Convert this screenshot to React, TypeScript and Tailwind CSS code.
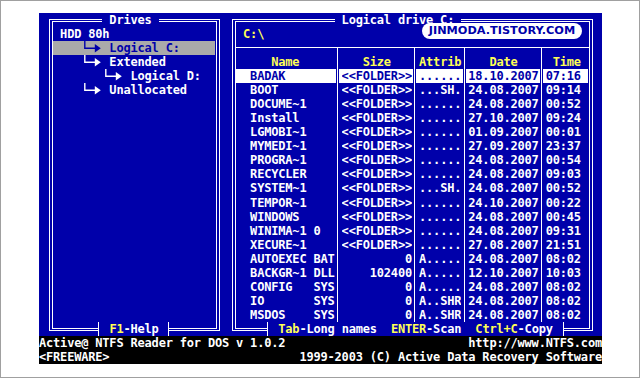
import React from "react";

type FileRow = { name: string; size: string; attr: string; date: string; time: string };

const files: FileRow[] = [
  { name: "BADAK", size: "<<FOLDER>>", attr: "......", date: "18.10.2007", time: "07:16" },
  { name: "BOOT", size: "<<FOLDER>>", attr: "...SH.", date: "24.08.2007", time: "09:14" },
  { name: "DOCUME~1", size: "<<FOLDER>>", attr: "......", date: "24.08.2007", time: "00:52" },
  { name: "Install", size: "<<FOLDER>>", attr: "......", date: "27.10.2007", time: "09:24" },
  { name: "LGMOBI~1", size: "<<FOLDER>>", attr: "......", date: "01.09.2007", time: "00:01" },
  { name: "MYMEDI~1", size: "<<FOLDER>>", attr: "......", date: "27.09.2007", time: "23:37" },
  { name: "PROGRA~1", size: "<<FOLDER>>", attr: "......", date: "24.08.2007", time: "00:54" },
  { name: "RECYCLER", size: "<<FOLDER>>", attr: "......", date: "24.08.2007", time: "09:03" },
  { name: "SYSTEM~1", size: "<<FOLDER>>", attr: "...SH.", date: "24.08.2007", time: "00:52" },
  { name: "TEMPOR~1", size: "<<FOLDER>>", attr: "......", date: "24.10.2007", time: "00:22" },
  { name: "WINDOWS", size: "<<FOLDER>>", attr: "......", date: "24.08.2007", time: "00:45" },
  { name: "WINIMA~1 0", size: "<<FOLDER>>", attr: "......", date: "24.08.2007", time: "09:31" },
  { name: "XECURE~1", size: "<<FOLDER>>", attr: "......", date: "27.08.2007", time: "21:51" },
  { name: "AUTOEXEC BAT", size: "0", attr: "A.....", date: "24.08.2007", time: "08:02" },
  { name: "BACKGR~1 DLL", size: "102400", attr: "A.....", date: "12.10.2007", time: "10:03" },
  { name: "CONFIG   SYS", size: "0", attr: "A.....", date: "24.08.2007", time: "08:02" },
  { name: "IO       SYS", size: "0", attr: "A..SHR", date: "24.08.2007", time: "08:02" },
  { name: "MSDOS    SYS", size: "0", attr: "A..SHR", date: "24.08.2007", time: "08:02" },
];

function Frame({ className }: { className: string }) {
  return (
    <div className={`${className} pt-[5.5px] pb-[5.2px] pl-[2.5px] pr-[1.8px]`}>
      <div className="h-full border border-white px-[2px] py-[1px]">
        <div className="h-full border border-white" />
      </div>
    </div>
  );
}

function Branch({ color }: { color: string }) {
  return (
    <svg width="21.1125" height="14.04" viewBox="0 0 21.1125 14.04" className="shrink-0">
      <path d="M3.8 0 V7.2 H14.5" stroke={color} strokeWidth="1.4" fill="none" />
      <path d="M13.8 3 L19.8 7.2 L13.8 11.4 Z" fill={color} />
    </svg>
  );
}

function SepTop() {
  return (
    <div className="flex flex-col">
      <div className="h-[6px] shrink-0" />
      <div className="ml-[2.5px] w-px flex-1 bg-white" />
    </div>
  );
}

function SepMid() {
  return (
    <div className="flex">
      <div className="ml-[2.5px] w-px h-full bg-white" />
    </div>
  );
}

function SepHl() {
  return (
    <div className="flex">
      <div className="w-[1.3px] shrink-0 bg-white" />
      <div className="w-[1.2px] shrink-0" />
      <div className="w-px shrink-0 bg-white" />
      <div className="w-[1px] shrink-0" />
      <div className="flex-1 bg-white" />
    </div>
  );
}

function TickLeft({ className }: { className: string }) {
  return (
    <div className={`${className} flex`}>
      <div className="w-[2.8px] shrink-0" />
      <div className="w-px shrink-0 bg-white" />
      <div className="flex-1 bg-[#0000aa]" />
    </div>
  );
}

function TickRight({ className }: { className: string }) {
  return (
    <div className={`${className} flex`}>
      <div className="w-[2.8px] shrink-0 bg-[#0000aa]" />
      <div className="w-px shrink-0 bg-white" />
      <div className="flex-1" />
    </div>
  );
}

function FileTable() {
  return (
    <div className="col-start-29 col-span-50 row-start-3 row-span-20 grid grid-cols-50 grid-rows-20">
      <div className="col-span-14" />
      <SepTop />
      <div className="col-span-10" />
      <SepTop />
      <div className="col-span-6" />
      <SepTop />
      <div className="col-span-10" />
      <SepTop />
      <div className="col-span-6" />

      <div className="col-span-14 text-center text-[#ffff55]">Name</div>
      <SepMid />
      <div className="col-span-10 text-center text-[#ffff55]">Size</div>
      <SepMid />
      <div className="col-span-6 text-center text-[#ffff55]">Attrib</div>
      <SepMid />
      <div className="col-span-10 text-center text-[#ffff55]">Date</div>
      <SepMid />
      <div className="col-span-6 text-center text-[#ffff55]">Time</div>

      {files.map((f, i) => {
        const hl = i === 0;
        const cell = hl ? "bg-white text-[#0000aa]" : "text-white";
        return (
          <React.Fragment key={f.name}>
            <div className={`col-span-14 whitespace-pre overflow-hidden ${cell}`}>{"  " + f.name}</div>
            {hl ? <SepHl /> : <SepMid />}
            <div className={`col-span-10 whitespace-pre overflow-hidden ${cell}`}>{f.size.padStart(10, " ")}</div>
            {hl ? <SepHl /> : <SepMid />}
            <div className={`col-span-6 whitespace-pre overflow-hidden ${cell}`}>{f.attr}</div>
            {hl ? <SepHl /> : <SepMid />}
            <div className={`col-span-10 whitespace-pre overflow-hidden ${cell}`}>{f.date}</div>
            {hl ? <SepHl /> : <SepMid />}
            <div className={`col-span-6 whitespace-pre overflow-hidden ${cell}`}>{f.time}</div>
          </React.Fragment>
        );
      })}
    </div>
  );
}

function Screen() {
  return (
    <div className="relative grid grid-cols-80 grid-rows-25 w-[563px] h-[351px] bg-[#0000aa] text-white font-['DejaVu_Sans_Mono',monospace] font-bold text-[12px] leading-[14.04px] tracking-[-0.1875px]">
      <Frame className="col-start-2 col-span-25 row-start-1 row-span-23" />
      <Frame className="col-start-28 col-span-52 row-start-1 row-span-23" />

      {/* titles */}
      <div className="col-start-10 col-span-8 row-start-1 bg-[#0000aa] whitespace-pre">{" Drives "}</div>
      <div className="col-start-43 col-span-18 row-start-1 bg-[#0000aa] whitespace-pre">{" Logical drive C: "}</div>

      {/* row 1 */}
      <div className="col-start-4 col-span-8 row-start-2 whitespace-pre">HDD 80h</div>
      <div className="col-start-30 col-span-4 row-start-2 whitespace-pre text-[#ffff55]">{"C:\\"}</div>

      {/* drive tree */}
      <div className="col-start-3 col-span-23 row-start-3 bg-[#aaaaaa]" />
      <div className="col-start-7 col-span-18 row-start-3 flex text-[#0000aa]">
        <Branch color="#0000aa" />
        <span className="whitespace-pre">{" Logical C:"}</span>
      </div>
      <div className="col-start-7 col-span-18 row-start-4 flex">
        <Branch color="#ffffff" />
        <span className="whitespace-pre">{" Extended"}</span>
      </div>
      <div className="col-start-10 col-span-15 row-start-5 flex">
        <Branch color="#ffffff" />
        <span className="whitespace-pre">{" Logical D:"}</span>
      </div>
      <div className="col-start-7 col-span-18 row-start-6 flex">
        <Branch color="#ffffff" />
        <span className="whitespace-pre">{" Unallocated"}</span>
      </div>

      {/* header separator line */}
      <div className="col-start-28 col-span-52 row-start-3">
        <div className="mt-[6px] ml-[5.5px] mr-[4.8px] h-px bg-white" />
      </div>

      <FileTable />

      {/* bottom border texts */}
      <TickLeft className="col-start-9 row-start-23" />
      <div className="col-start-10 col-span-9 row-start-23 bg-[#0000aa] whitespace-pre">
        {" "}
        <span className="text-[#ffff55]">F1</span>
        {"-Help "}
      </div>
      <TickRight className="col-start-19 row-start-23" />

      <TickLeft className="col-start-33 row-start-23" />
      <div className="col-start-34 col-span-41 row-start-23 bg-[#0000aa] whitespace-pre">
        {" "}
        <span className="text-[#ffff55]">Tab</span>
        {"-Long names  "}
        <span className="text-[#ffff55]">ENTER</span>
        {"-Scan  "}
        <span className="text-[#ffff55]">Ctrl+C</span>
        {"-Copy "}
      </div>
      <TickRight className="col-start-75 row-start-23" />

      {/* status bar */}
      <div className="col-start-1 col-span-80 row-start-24 row-span-2 bg-black grid grid-rows-2">
        <div className="flex justify-between whitespace-pre">
          <span>Active@ NTFS Reader for DOS v 1.0.2</span>
          <span>http://www.NTFS.com</span>
        </div>
        <div className="flex justify-between whitespace-pre">
          <span>{"<FREEWARE>"}</span>
          <span>1999-2003 (C) Active Data Recovery Software</span>
        </div>
      </div>

      {/* watermark overlay */}
      <div className="absolute left-[382.7px] top-[9.7px] w-[160.6px] h-[16.6px] rounded-[8px] bg-white flex items-center justify-center whitespace-nowrap font-['DejaVu_Sans',sans-serif] font-bold text-[11.3px] tracking-normal leading-none text-[#0000aa]">
        JINMODA.TISTORY.COM
      </div>
    </div>
  );
}

export default function App() {
  return (
    <div className="w-[640px] h-[378px] border border-[#a0a0a0] bg-white pl-[38px] pt-[12px]">
      <Screen />
    </div>
  );
}
